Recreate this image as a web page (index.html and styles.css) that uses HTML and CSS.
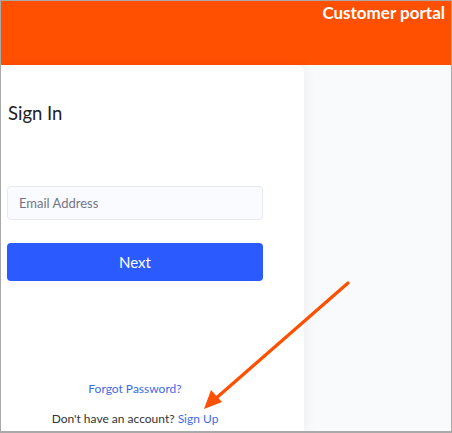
FILE: index.html
```html
<!DOCTYPE html>
<html>
<head>
<meta charset="utf-8">
<link rel="stylesheet" href="styles.css">
</head>
<body>
<div class="frame">
  <header class="topbar">
    <div class="brand">Customer portal</div>
  </header>
  <main class="content">
    <section class="card">
      <h1 class="title">Sign In</h1>
      <div class="field">Email Address</div>
      <button class="btn">Next</button>
      <div class="links">
        <a class="link">Forgot Password?</a>
        <p class="signup">Don't have an account? <a class="link">Sign Up</a></p>
      </div>
    </section>
    <section class="side"></section>
  </main>
  <svg class="arrow" width="452" height="433" viewBox="0 0 452 433">
    <line x1="348" y1="283" x2="214" y2="400" stroke="#ff4f00" stroke-width="3.2" stroke-linecap="round"/>
    <polygon points="204,409 211,390 222,402" fill="#ff4f00"/>
  </svg>
</div>
</body>
</html>
```
FILE: styles.css
```css
* { box-sizing: border-box; }
html, body { margin: 0; padding: 0; }
body { font-family: Lato, "Noto Sans", sans-serif; background: #fff; }
.frame {
  position: relative;
  width: 452px;
  height: 433px;
  border: 1px solid #a9a9a9;
  border-bottom-width: 2px;
  overflow: hidden;
  display: flex;
  flex-direction: column;
}
.topbar {
  height: 64px;
  background: #ff4f00;
  flex: none;
  display: flex;
  justify-content: flex-end;
}
.brand {
  color: #fff;
  font-weight: 700;
  font-size: 17px;
  line-height: 22px;
  padding: 1px 6px 0 0;
}
.content {
  flex: 1;
  display: flex;
  background: #f9fafc;
}
.card {
  width: 303px;
  background: #fff;
  border-top-right-radius: 8px;
  box-shadow: 4px 0 12px rgba(0, 0, 0, 0.04);
  padding: 36px 41px 0 6px;
  display: flex;
  flex-direction: column;
  position: relative;
}
.title {
  margin: 0;
  font-weight: 400;
  font-size: 18.5px;
  line-height: 24px;
  color: #222;
  padding-left: 1px;
}
.field {
  margin-top: 61px;
  height: 34px;
  border: 1px solid #e8e9ee;
  background: #fafbff;
  border-radius: 4px;
  font-size: 13px;
  line-height: 32px;
  color: #747487;
  padding-left: 11px;
}
.btn {
  margin-top: 23px;
  height: 38px;
  border: none;
  border-radius: 4px;
  background: #2b5bff;
  color: #fff;
  font-family: Lato, "Noto Sans", sans-serif;
  font-size: 15px;
  width: 100%;
}
.links {
  margin-top: 100px;
  display: flex;
  flex-direction: column;
  align-items: center;
  font-size: 12px;
  line-height: 16px;
}
.link { color: #3e6ae8; text-decoration: none; }
.signup { margin: 14px 0 0; color: #333; }
.side { flex: 1; }
.arrow { position: absolute; left: -1px; top: -1px; pointer-events: none; }
```
